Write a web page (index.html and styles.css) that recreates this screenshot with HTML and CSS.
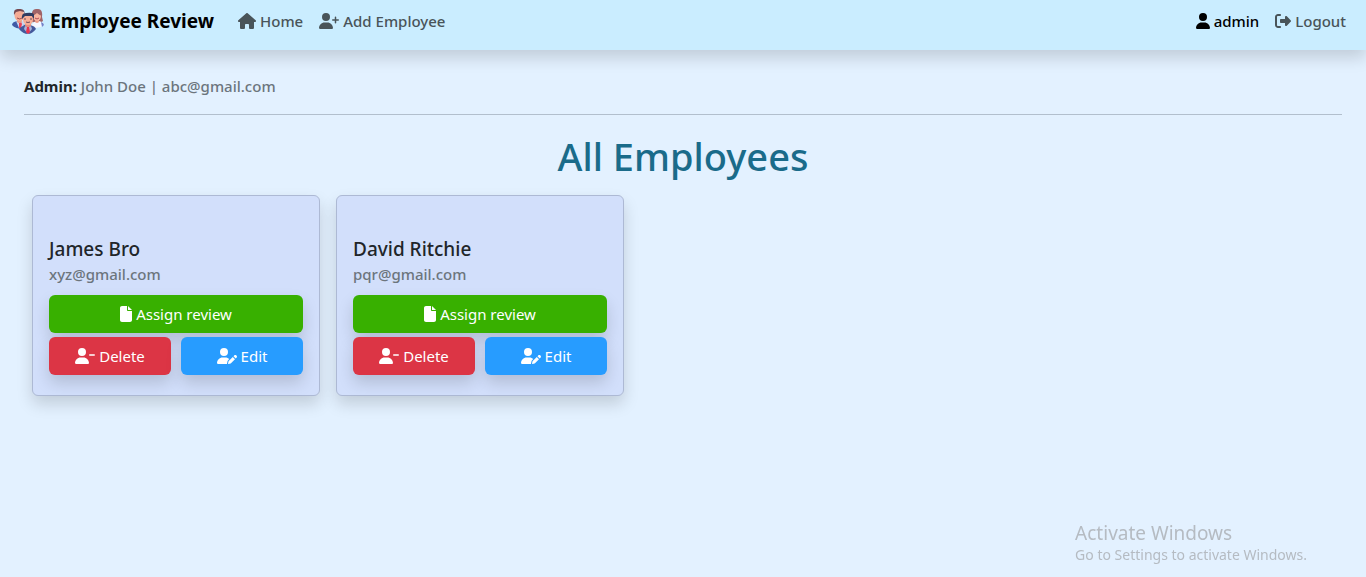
FILE: index.html
```html
<!DOCTYPE html>
<html lang="en">
<head>
<meta charset="utf-8">
<meta name="viewport" content="width=device-width, initial-scale=1">
<title>Employee Review</title>
<link rel="stylesheet" href="styles.css">
</head>
<body>
<svg class="sprite" aria-hidden="true">
  <symbol id="i-home" viewBox="0 0 576 512"><path d="M575.8 255.5c0 18-15 32.1-32 32.1h-32l.7 160.2c0 2.7-.2 5.4-.5 8.1V472c0 22.1-17.9 40-40 40H456c-1.1 0-2.2 0-3.3-.1c-1.4 .1-2.8 .1-4.2 .1H416 392c-22.1 0-40-17.9-40-40V448 384c0-17.7-14.3-32-32-32H256c-17.7 0-32 14.3-32 32v64 24c0 22.1-17.9 40-40 40H160 128.1c-1.5 0-3-.1-4.5-.2c-1.2 .1-2.4 .2-3.6 .2H104c-22.1 0-40-17.9-40-40V360c0-.9 0-1.9 .1-2.8V287.6H32c-18 0-32-14-32-32.1c0-9 3-17 10-24L266.4 8c7-7 15-8 22-8s15 2 21 7L564.8 231.5c8 7 12 15 11 24z"/></symbol>
  <symbol id="i-user" viewBox="0 0 448 512"><path d="M224 256A128 128 0 1 0 224 0a128 128 0 1 0 0 256zm-45.7 48C79.8 304 0 383.8 0 482.3C0 498.7 13.3 512 29.7 512H418.3c16.4 0 29.7-13.3 29.7-29.7C448 383.8 368.2 304 269.7 304H178.3z"/></symbol>
  <symbol id="i-user-plus" viewBox="0 0 640 512"><path d="M96 128a128 128 0 1 1 256 0A128 128 0 1 1 96 128zM0 482.3C0 383.8 79.8 304 178.3 304h91.4C368.2 304 448 383.8 448 482.3c0 16.4-13.3 29.7-29.7 29.7H29.7C13.3 512 0 498.7 0 482.3zM504 312V248H440c-13.3 0-24-10.7-24-24s10.7-24 24-24h64V136c0-13.3 10.7-24 24-24s24 10.7 24 24v64h64c13.3 0 24 10.7 24 24s-10.7 24-24 24H552v64c0 13.3-10.7 24-24 24s-24-10.7-24-24z"/></symbol>
  <symbol id="i-user-minus" viewBox="0 0 640 512"><path d="M96 128a128 128 0 1 1 256 0A128 128 0 1 1 96 128zM0 482.3C0 383.8 79.8 304 178.3 304h91.4C368.2 304 448 383.8 448 482.3c0 16.4-13.3 29.7-29.7 29.7H29.7C13.3 512 0 498.7 0 482.3zM472 200H616c13.3 0 24 10.7 24 24s-10.7 24-24 24H472c-13.3 0-24-10.7-24-24s10.7-24 24-24z"/></symbol>
  <symbol id="i-user-pen" viewBox="0 0 640 512"><path d="M224 256A128 128 0 1 0 224 0a128 128 0 1 0 0 256zm-45.7 48C79.8 304 0 383.8 0 482.3C0 498.7 13.3 512 29.7 512H322.8c-3.1-8.8-3.7-18.4-1.4-27.8l15-60.1c2.8-11.3 8.6-21.5 16.8-29.7l40.3-40.3c-32.1-31-75.7-50.1-123.9-50.1H178.3zm435.5-68.3c-15.6-15.6-40.9-15.6-56.6 0l-29.4 29.4 71 71 29.4-29.4c15.6-15.6 15.6-40.9 0-56.6l-14.4-14.4zM375.9 417c-4.1 4.1-7 9.2-8.4 14.9l-15 60.1c-1.4 5.5 .2 11.2 4.2 15.2s9.7 5.6 15.2 4.2l60.1-15c5.6-1.4 10.8-4.3 14.9-8.4L576.1 358.7l-71-71L375.9 417z"/></symbol>
  <symbol id="i-file" viewBox="0 0 384 512"><path d="M0 64C0 28.7 28.7 0 64 0H224V128c0 17.7 14.3 32 32 32H384V448c0 35.3-28.7 64-64 64H64c-35.3 0-64-28.7-64-64V64zm384 64H256V0L384 128z"/></symbol>
  <symbol id="i-logout" viewBox="0 0 512 512"><path d="M377.9 105.9L500.7 228.7c7.2 7.2 11.3 17.1 11.3 27.3s-4.1 20.1-11.3 27.3L377.9 406.1c-6.4 6.4-15 9.9-24 9.9c-18.7 0-33.9-15.2-33.9-33.9l0-62.1-128 0c-17.7 0-32-14.3-32-32l0-64c0-17.7 14.3-32 32-32l128 0 0-62.1c0-18.7 15.2-33.9 33.9-33.9c9 0 17.6 3.6 24 9.9zM160 96L96 96c-17.7 0-32 14.3-32 32l0 256c0 17.7 14.3 32 32 32l64 0c17.7 0 32 14.3 32 32s-14.3 32-32 32l-64 0c-53 0-96-43-96-96L0 128C0 75 43 32 96 32l64 0c17.7 0 32 14.3 32 32s-14.3 32-32 32z"/></symbol>
</svg>

<header class="navbar">
  <a class="brand" href="#">
    <svg class="brand-logo" viewBox="0 0 32 28" aria-hidden="true">
      <!-- man, left -->
      <path d="M0 18q0-3 5-4l4 1 5 4-2 3Q3 22 0 18z" fill="#3f5aa6"/>
      <path d="M4 14l4 2 3-2 1 4-2 3H7z" fill="#c9d3ee"/>
      <path d="M7 16l2-1 1 2-1 4H7z" fill="#e8425a"/>
      <rect x="5" y="11" width="5" height="5" rx="2" fill="#ec9a86"/>
      <ellipse cx="7.500" cy="8.500" rx="5" ry="5.500" fill="#f5ab94"/>
      <path d="M2 8Q1 1 7 2q6-1 6 6l-1-3-4-1-4 1z" fill="#76474f"/>
      <path d="M5 11q3 2 5 0" stroke="#9b4c50" fill="none"/>
      <!-- woman, right -->
      <path d="M20 15Q18 1 25 2q6-1 5 8l1 4-3 2z" fill="#a06468"/>
      <path d="M32 18q0-3-5-4l-5 1-3 4 2 2q8 0 11-3z" fill="#f5f7ff"/>
      <path d="M29 15q3 1 3 3l-2 2z" fill="#7183ca"/>
      <rect x="23" y="11" width="4" height="5" rx="2" fill="#ec9a86"/>
      <ellipse cx="25" cy="9" rx="4" ry="5" fill="#f8b5a0"/>
      <path d="M20 9q0-7 5-6 5-1 5 6-3-1-5-3-2 2-5 3z" fill="#a06468"/>
      <path d="M23 11q2 2 4 0" stroke="#b14b58" fill="none"/>
      <!-- man, front -->
      <path d="M7 22q2-3 7-4h4q5 1 6 4-4 5-8 5-5 0-9-5z" fill="#45589b"/>
      <path d="M13 19l3 1 3-1 1 3-4 5-4-5z" fill="#a9b4da"/>
      <path d="M15 20h2l1 5-2 2-2-2z" fill="#e8324e"/>
      <rect x="13" y="15" width="6" height="5" rx="2" fill="#e88c7d"/>
      <ellipse cx="16" cy="12.500" rx="5" ry="5.500" fill="#f7ae97"/>
      <path d="M10 12Q9 6 14 6q8-1 8 2v4l-2-3h-7z" fill="#303b60"/>
      <path d="M12 12h2m4 0h2M14 15q2 1 4 0" stroke="#67485c" fill="none"/>
    </svg>
    <span>Employee Review</span>
  </a>
  <nav class="nav-links" aria-label="Main">
    <a href="#"><svg class="icon icon-house" aria-hidden="true"><use href="#i-home"/></svg>Home</a>
    <a href="#"><svg class="icon icon-wide" aria-hidden="true"><use href="#i-user-plus"/></svg>Add Employee</a>
  </nav>
  <nav class="nav-links nav-account" aria-label="Account">
    <a class="active" href="#"><svg class="icon icon-user" aria-hidden="true"><use href="#i-user"/></svg>admin</a>
    <a href="#"><svg class="icon" aria-hidden="true"><use href="#i-logout"/></svg>Logout</a>
  </nav>
</header>

<main class="page">
  <p class="account"><strong>Admin:</strong> John Doe | abc@gmail.com</p>
  <hr class="rule">
  <h1 class="title">All Employees</h1>
  <div class="cards">
    <article class="card">
      <h2 class="name">James Bro</h2>
      <p class="email">xyz@gmail.com</p>
      <div class="actions">
        <button class="btn assign" type="button"><svg class="icon icon-file" aria-hidden="true"><use href="#i-file"/></svg>Assign review</button>
        <button class="btn delete" type="button"><svg class="icon icon-wide" aria-hidden="true"><use href="#i-user-minus"/></svg>Delete</button>
        <button class="btn edit" type="button"><svg class="icon icon-wide" aria-hidden="true"><use href="#i-user-pen"/></svg>Edit</button>
      </div>
    </article>
    <article class="card">
      <h2 class="name">David Ritchie</h2>
      <p class="email">pqr@gmail.com</p>
      <div class="actions">
        <button class="btn assign" type="button"><svg class="icon icon-file" aria-hidden="true"><use href="#i-file"/></svg>Assign review</button>
        <button class="btn delete" type="button"><svg class="icon icon-wide" aria-hidden="true"><use href="#i-user-minus"/></svg>Delete</button>
        <button class="btn edit" type="button"><svg class="icon icon-wide" aria-hidden="true"><use href="#i-user-pen"/></svg>Edit</button>
      </div>
    </article>
  </div>
</main>

<aside class="watermark">
  <p class="watermark-title">Activate Windows</p>
  <p class="watermark-text">Go to Settings to activate Windows.</p>
</aside>
</body>
</html>
```

FILE: styles.css
```css
* { box-sizing: border-box; }

body {
  margin: 0;
  min-height: 100vh;
  background: #e3f1ff;
  color: #212529;
  font-family: "Segoe UI", "Noto Sans", "Open Sans", sans-serif;
  font-size: 15px;
  font-weight: 500;
  line-height: 24px;
}

h1, h2, p { margin: 0; }
a { color: inherit; text-decoration: none; }

.sprite { position: absolute; width: 0; height: 0; }

.icon {
  flex: none;
  width: 16px;
  height: 16px;
  fill: currentColor;
}
.icon-wide { width: 20px; }
.icon-house { width: 18px; }
.icon-user { width: 14px; }
.icon-file { width: 12px; }

.navbar {
  display: flex;
  align-items: center;
  padding: 0 20px 8px 12px;
  background: #caedff;
  box-shadow: 0 8px 16px rgba(0, 0, 0, 0.15);
}
.brand {
  display: flex;
  align-items: center;
  gap: 6px;
  height: 42px;
  margin-right: 24px;
  color: #000;
  font-size: 19px;
  font-weight: 700;
}
.brand-logo { width: 32px; height: 28px; }
.nav-links {
  display: flex;
  gap: 16px;
  color: #495459;
}
.nav-links a { display: flex; align-items: center; gap: 4px; }
.nav-account { margin-left: auto; }
.nav-links .active { color: #000; }

.page { padding: 24px; }
.account { color: #6c757d; }
.account strong { color: #212529; font-weight: 700; }
.rule {
  margin: 16px 0;
  border: 0;
  border-top: 1px solid #b2bfcd;
}
.title {
  color: #1a6b8a;
  font-size: 38px;
  font-weight: 500;
  line-height: 50px;
  text-align: center;
}

.cards {
  display: flex;
  flex-wrap: wrap;
  gap: 16px;
  padding: 14px 8px;
}
.card {
  width: 288px;
  padding: 40px 16px 20px;
  border: 1px solid #adb9d4;
  border-radius: 6px;
  background: #d2dffb;
  box-shadow: 0 8px 16px rgba(0, 0, 0, 0.15);
}
.name {
  font-size: 19px;
  font-weight: 500;
  line-height: 26px;
}
.email { color: #6c757d; }
.actions {
  display: grid;
  grid-template-columns: 1fr 1fr;
  gap: 4px 10px;
  margin-top: 9px;
}
.btn {
  display: flex;
  align-items: center;
  justify-content: center;
  gap: 4px;
  height: 38px;
  border: 0;
  border-radius: 6px;
  color: #fff;
  font: inherit;
  font-weight: 400;
  box-shadow: 0 8px 16px rgba(0, 0, 0, 0.15);
}
.assign { grid-column: 1 / -1; background: #38b000; }
.delete { background: #dc3545; }
.edit { background: #279cff; }

.watermark {
  position: fixed;
  right: 59px;
  bottom: 12px;
  color: #b5bbc2;
  font-weight: 400;
  pointer-events: none;
}
.watermark-title { font-size: 19px; }
.watermark-text { font-size: 14px; line-height: 20px; }
```
